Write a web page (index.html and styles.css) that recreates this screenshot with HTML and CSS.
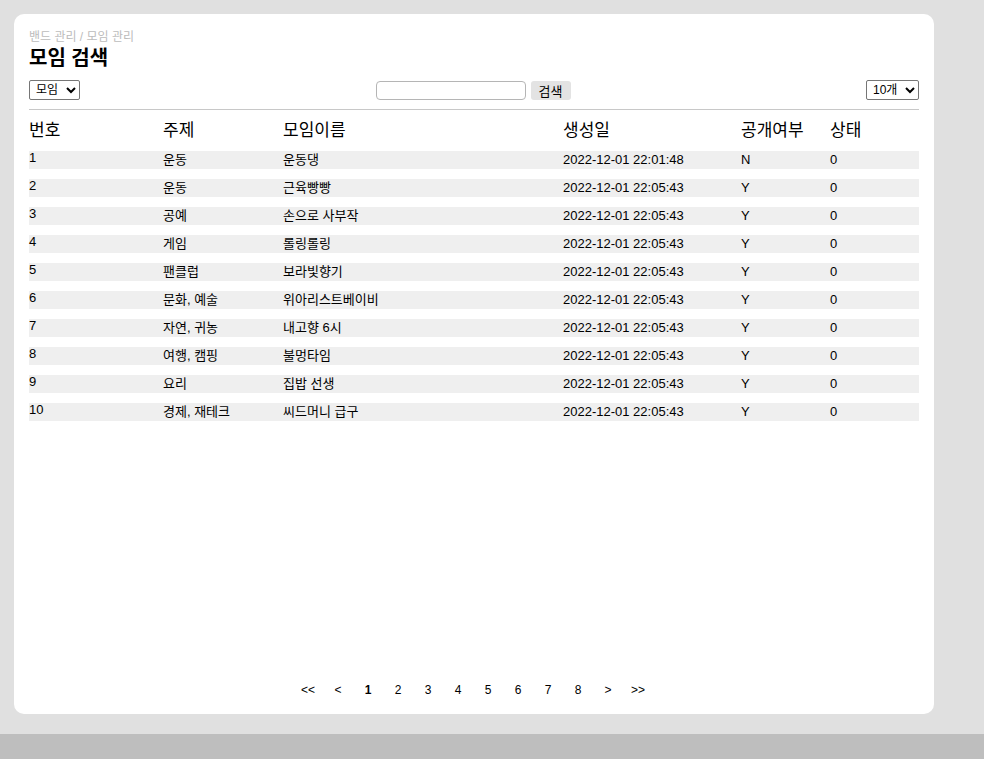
FILE: index.html
```html
<!DOCTYPE html>
<html lang="ko">
<head>
<meta charset="utf-8">
<link rel="stylesheet" href="styles.css">
</head>
<body>
<div class="page">
  <main class="card">
    <div class="crumb">밴드 관리 / 모임 관리</div>
    <h1 class="title">모임 검색</h1>
    <div class="controls">
      <select class="sel sel-type"><option>모임</option></select>
      <div class="search">
        <input class="search-input" type="text">
        <button class="search-btn">검색</button>
      </div>
      <select class="sel sel-count"><option>10개</option></select>
    </div>
    <hr class="divider">
    <table class="list">
      <colgroup>
        <col class="c1"><col class="c2"><col class="c3"><col class="c4"><col class="c5"><col class="c6">
      </colgroup>
      <thead>
        <tr><th>번호</th><th>주제</th><th>모임이름</th><th>생성일</th><th>공개여부</th><th>상태</th></tr>
      </thead>
      <tbody>
        <tr><td>1</td><td>운동</td><td>운동댕</td><td>2022-12-01 22:01:48</td><td>N</td><td>0</td></tr>
        <tr><td>2</td><td>운동</td><td>근육빵빵</td><td>2022-12-01 22:05:43</td><td>Y</td><td>0</td></tr>
        <tr><td>3</td><td>공예</td><td>손으로 사부작</td><td>2022-12-01 22:05:43</td><td>Y</td><td>0</td></tr>
        <tr><td>4</td><td>게임</td><td>롤링롤링</td><td>2022-12-01 22:05:43</td><td>Y</td><td>0</td></tr>
        <tr><td>5</td><td>팬클럽</td><td>보라빛향기</td><td>2022-12-01 22:05:43</td><td>Y</td><td>0</td></tr>
        <tr><td>6</td><td>문화, 예술</td><td>위아리스트베이비</td><td>2022-12-01 22:05:43</td><td>Y</td><td>0</td></tr>
        <tr><td>7</td><td>자연, 귀농</td><td>내고향 6시</td><td>2022-12-01 22:05:43</td><td>Y</td><td>0</td></tr>
        <tr><td>8</td><td>여행, 캠핑</td><td>불멍타임</td><td>2022-12-01 22:05:43</td><td>Y</td><td>0</td></tr>
        <tr><td>9</td><td>요리</td><td>집밥 선생</td><td>2022-12-01 22:05:43</td><td>Y</td><td>0</td></tr>
        <tr><td>10</td><td>경제, 재테크</td><td>씨드머니 급구</td><td>2022-12-01 22:05:43</td><td>Y</td><td>0</td></tr>
      </tbody>
    </table>
    <nav class="pager">
      <a class="pg">&lt;&lt;</a>
      <a class="pg">&lt;</a>
      <a class="pg pg-on">1</a>
      <a class="pg">2</a>
      <a class="pg">3</a>
      <a class="pg">4</a>
      <a class="pg">5</a>
      <a class="pg">6</a>
      <a class="pg">7</a>
      <a class="pg">8</a>
      <a class="pg">&gt;</a>
      <a class="pg">&gt;&gt;</a>
    </nav>
  </main>
</div>
<footer class="bottom"></footer>
</body>
</html>
```
FILE: styles.css
```css
html, body {
  margin: 0;
  padding: 0;
}
body {
  background: #e0e0e0;
  font-family: "Liberation Sans", "Noto Sans CJK KR", sans-serif;
  color: #000;
}
.page {
  padding: 14px 50px 20px 14px;
}
.card {
  background: #fff;
  border-radius: 10px;
  width: 920px;
  height: 700px;
  box-sizing: border-box;
  padding: 16px 15px 0 15px;
  display: flex;
  flex-direction: column;
}
.crumb {
  font-size: 12px;
  line-height: 14px;
  color: #bcbcbc;
}
.title {
  margin: 1px 0 0 0;
  font-size: 20px;
  line-height: 26px;
  font-weight: bold;
}
.controls {
  margin-top: 9px;
  display: flex;
  align-items: center;
  justify-content: space-between;
  height: 20px;
}
.sel {
  font-family: "Liberation Sans", "Noto Sans CJK KR", sans-serif;
  font-size: 12px;
  height: 20px;
  border: 1px solid #767676;
  border-radius: 2px;
  background: #fff;
  color: #000;
  padding: 0 0 0 2px;
  margin: 0;
}
.sel-type { width: 51px; }
.sel-count { width: 53px; }
.search {
  display: flex;
  align-items: center;
  gap: 5px;
}
.search-input {
  width: 150px;
  height: 19px;
  box-sizing: border-box;
  border: 1px solid #b5b5b5;
  border-radius: 4px;
  margin: 0;
  padding: 0 4px;
}
.search-btn {
  height: 19px;
  width: 40px;
  border: none;
  border-radius: 3px;
  background: #e3e3e3;
  font-family: "Liberation Sans", "Noto Sans CJK KR", sans-serif;
  font-size: 13px;
  color: #000;
  padding: 0;
  margin: 0;
}
.divider {
  margin: 9px 0 0 0;
  border: none;
  border-top: 1px solid #c8c8c8;
  height: 0;
}
.list {
  width: 890px;
  border-collapse: separate;
  border-spacing: 0 10px;
  table-layout: fixed;
}
.c1 { width: 134px; }
.c2 { width: 120px; }
.c3 { width: 280px; }
.c4 { width: 178px; }
.c5 { width: 89px; }
.c6 { width: 89px; }
.list th {
  font-weight: normal;
  font-size: 17px;
  line-height: 21px;
  text-align: left;
  padding: 0;
}
.list td {
  background: #efefef;
  font-size: 13px;
  line-height: 18px;
  height: 18px;
  padding: 0;
  vertical-align: top;
}
.list td:first-child { line-height: 14px; }
.pager {
  margin-top: auto;
  margin-bottom: 16px;
  display: flex;
  justify-content: center;
  margin-left: -2px;
}
.pg {
  width: 30px;
  text-align: center;
  font-size: 12px;
  line-height: 16px;
  color: #000;
  cursor: pointer;
}
.pg-on { font-weight: bold; }
.bottom {
  background: #bebebe;
  height: 25px;
}
```
